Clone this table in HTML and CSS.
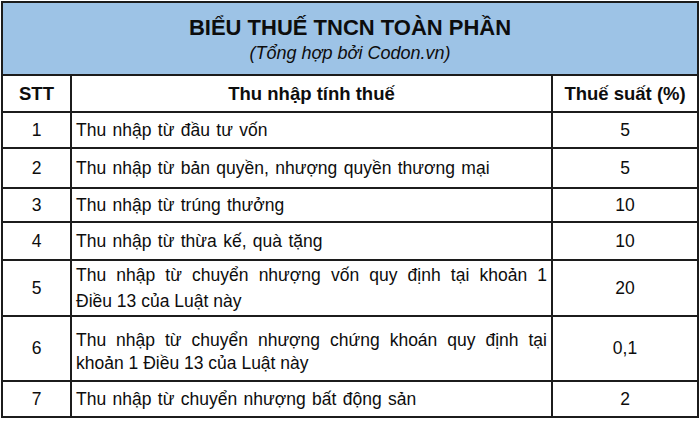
FILE: index.html
```html
<!DOCTYPE html>
<html lang="vi">
<head>
<meta charset="utf-8">
<link rel="stylesheet" href="styles.css">
</head>
<body>
<div class="sheet">
<table class="tax">
  <colgroup>
    <col class="c-stt">
    <col class="c-desc">
    <col class="c-rate">
  </colgroup>
  <tr class="r-title">
    <td colspan="3" class="title-cell">
      <div class="title">BIỂU THUẾ TNCN TOÀN PHẦN</div>
      <div class="subtitle">(Tổng hợp bởi Codon.vn)</div>
    </td>
  </tr>
  <tr class="r-head">
    <th>STT</th>
    <th>Thu nhập tính thuế</th>
    <th>Thuế suất (%)</th>
  </tr>
  <tr class="r1">
    <td class="num">1</td>
    <td class="desc">Thu nhập từ đầu tư vốn</td>
    <td class="num">5</td>
  </tr>
  <tr class="r2">
    <td class="num">2</td>
    <td class="desc">Thu nhập từ bản quyền, nhượng quyền thương mại</td>
    <td class="num">5</td>
  </tr>
  <tr class="r3">
    <td class="num">3</td>
    <td class="desc">Thu nhập từ trúng thưởng</td>
    <td class="num">10</td>
  </tr>
  <tr class="r4">
    <td class="num">4</td>
    <td class="desc">Thu nhập từ thừa kế, quà tặng</td>
    <td class="num">10</td>
  </tr>
  <tr class="r5">
    <td class="num">5</td>
    <td class="desc multi m5"><span class="line-j">Thu nhập từ chuyển nhượng vốn quy định tại khoản 1</span><span class="line">Điều 13 của Luật này</span></td>
    <td class="num">20</td>
  </tr>
  <tr class="r6">
    <td class="num">6</td>
    <td class="desc multi m6"><span class="line-j">Thu nhập từ chuyển nhượng chứng khoán quy định tại</span><span class="line">khoản 1 Điều 13 của Luật này</span></td>
    <td class="num">0,1</td>
  </tr>
  <tr class="r7">
    <td class="num">7</td>
    <td class="desc">Thu nhập từ chuyển nhượng bất động sản</td>
    <td class="num">2</td>
  </tr>
</table>
</div>
</body>
</html>
```

FILE: styles.css
```css
html, body {
  margin: 0;
  padding: 0;
  background: #ffffff;
}

body {
  font-family: "Liberation Sans", Arial, sans-serif;
  color: #0d0d0d;
  width: 700px;
  height: 422px;
  overflow: hidden;
}

.sheet {
  padding: 1px 0 0 1px;
}

.tax {
  border-collapse: collapse;
  table-layout: fixed;
  width: 696px;
}

.c-stt { width: 69px; }
.c-desc { width: 481px; }
.c-rate { width: 146px; }

.tax td,
.tax th {
  border: 2px solid #1c1c1c;
  padding: 0;
  font-size: 17.5px;
  vertical-align: middle;
}

.title-cell {
  background: #9dc3e6;
  text-align: center;
}

.title {
  font-weight: bold;
  font-size: 22px;
  line-height: 26px;
  padding-top: 2px;
}

.subtitle {
  font-style: italic;
  font-size: 18px;
  line-height: 24px;
}

.r-title { height: 73px; }
.r-head { height: 37px; }
.r1 { height: 36px; }
.r2 { height: 40px; }
.r3 { height: 34px; }
.r4 { height: 38px; }
.r5 { height: 56px; }
.r6 { height: 65px; }
.r7 { height: 36px; }

.tax th {
  font-weight: bold;
  font-size: 18.5px;
  text-align: center;
}

.num {
  text-align: center;
}

.desc {
  padding: 0 4px 0 4px !important;
  line-height: 20px;
  word-spacing: 1.5px;
}

.multi {
  line-height: 26px;
  word-spacing: 0;
}

.m6 {
  line-height: 23px;
  padding-top: 6px !important;
}

.line-j {
  display: block;
  text-align: justify;
  text-align-last: justify;
}

.line {
  display: block;
}
```
